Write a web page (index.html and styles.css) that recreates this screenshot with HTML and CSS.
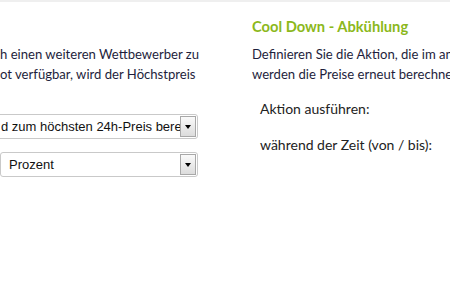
FILE: index.html
```html
<!DOCTYPE html>
<html lang="de">
<head>
    <meta charset="UTF-8">
    <title>Preisregeln</title>
    <link rel="stylesheet" href="styles.css">
</head>
<body>
    <div class="topbar"></div>
    <div class="page">
        <section class="col col-left">
            <p class="text">h einen weiteren Wettbewerber zu<br>ot verfügbar, wird der Höchstpreis</p>
            <div class="select select-cut">
                <span class="value">d zum höchsten 24h-Preis berechnet</span>
                <span class="arrow"></span>
            </div>
            <div class="select">
                <span class="value">Prozent</span>
                <span class="arrow"></span>
            </div>
        </section>

        <section class="col col-right">
            <h2 class="title">Cool Down - Abkühlung</h2>
            <p class="text">Definieren Sie die Aktion, die im anschließenden Zeitraum<br>werden die Preise erneut berechnet, sobald die Zeit</p>
            <div class="field">Aktion ausführen:</div>
            <div class="field">während der Zeit (von / bis):</div>
        </section>
    </div>
</body>
</html>
```

FILE: styles.css
```css
body {
    margin: 0;
    background: #fff;
    font-family: Lato, "Open Sans", sans-serif;
    font-size: 14px;
    color: #1e1e3c;
    overflow: hidden;
}

.topbar {
    height: 2px;
    background: #efefef;
}

.page {
    display: grid;
    grid-template-columns: 198px 1fr;
    gap: 54px;
}

.col {
    min-width: 0;
    white-space: nowrap;
}

.col-left {
    padding-top: 42px;
}

.col-right {
    padding-top: 14px;
}

.text {
    margin: 0;
    font-size: 13.1px;
    line-height: 20px;
}

.title {
    margin: 0 0 8px;
    font-size: 14.7px;
    line-height: 20px;
    font-weight: bold;
    color: #8cb81c;
}

.field {
    margin-left: 8px;
    margin-top: 15px;
    line-height: 20px;
    color: #222;
}

.field + .field {
    margin-top: 16px;
}

.select {
    display: flex;
    align-items: center;
    height: 25px;
    box-sizing: border-box;
    margin-top: 13px;
    padding: 0 1px 0 8px;
    border: 1px solid #c9c9c9;
    border-radius: 3px;
    background: #fff;
    font-family: "Liberation Sans", Arial, sans-serif;
    font-size: 13px;
    color: #111;
}

.select-cut {
    margin-left: -8px;
    margin-top: 30px;
}

.value {
    flex: 1;
    overflow: hidden;
}

.arrow {
    position: relative;
    width: 16px;
    height: 21px;
    box-sizing: border-box;
    border: 1px solid #a8a8a8;
    background: linear-gradient(#fafafa, #dcdcdc);
}

.arrow::after {
    content: "";
    position: absolute;
    left: 4px;
    top: 8px;
    border-left: 3px solid transparent;
    border-right: 3px solid transparent;
    border-top: 4px solid #000;
}
```
